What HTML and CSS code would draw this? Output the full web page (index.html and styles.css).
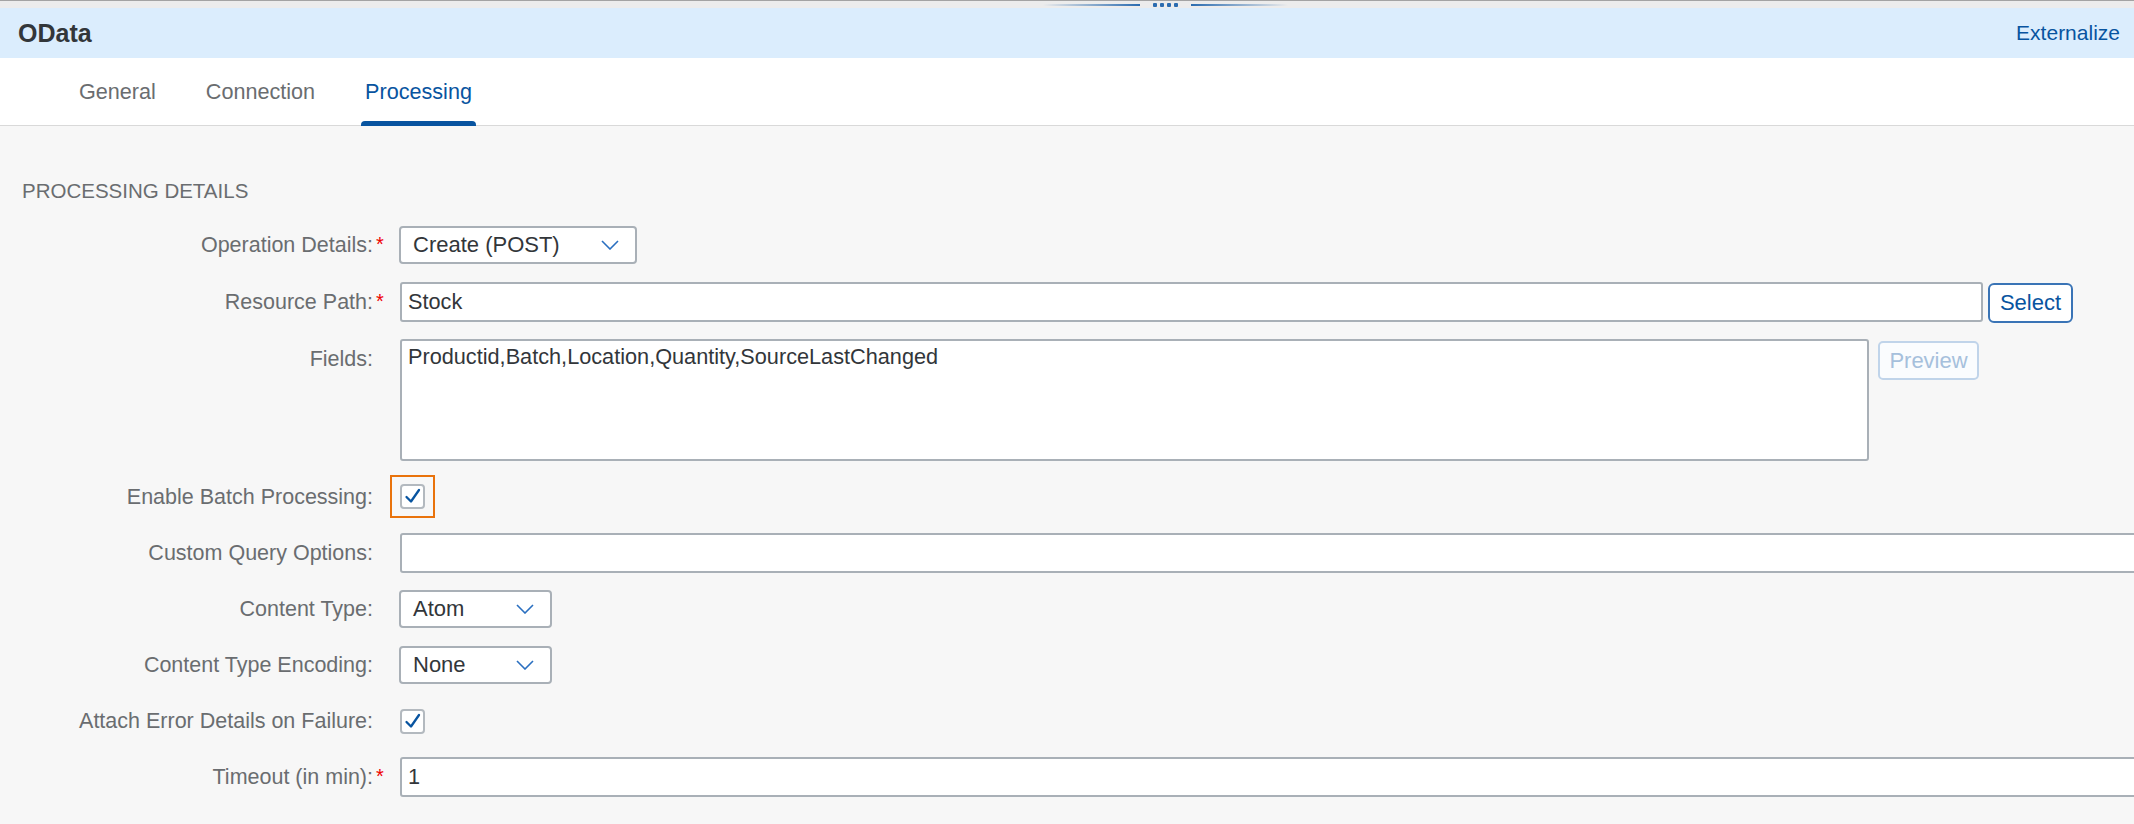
FILE: index.html
```html
<!DOCTYPE html>
<html lang="en">
<head>
<meta charset="utf-8">
<title>OData</title>
<link rel="stylesheet" href="styles.css">
</head>
<body>
<div class="topbar">
  <div class="handle">
    <span class="hline hline-left"></span>
    <span class="dots"><i></i><i></i><i></i><i></i></span>
    <span class="hline hline-right"></span>
  </div>
</div>
<header class="header">
  <h1 class="title">OData</h1>
  <a class="externalize">Externalize</a>
</header>
<nav class="tabs">
  <div class="tab">General</div>
  <div class="tab">Connection</div>
  <div class="tab active">Processing</div>
</nav>
<main class="content">
  <h2 class="section-title">PROCESSING DETAILS</h2>
  <div class="form">
    <div class="row">
      <label class="label required">Operation Details:</label>
      <div class="select select-op"><span>Create (POST)</span><svg class="chev" width="18" height="10" viewBox="0 0 18 10"><polyline points="1,1 9,9 17,1" fill="none" stroke="#2a6fc0" stroke-width="1.6"/></svg></div>
    </div>
    <div class="row">
      <label class="label required">Resource Path:</label>
      <div class="input input-resource">Stock</div>
      <button class="btn btn-select">Select</button>
    </div>
    <div class="row row-top">
      <label class="label">Fields:</label>
      <div class="textarea">Productid,Batch,Location,Quantity,SourceLastChanged</div>
      <button class="btn btn-preview">Preview</button>
    </div>
    <div class="row row-focus">
      <label class="label">Enable Batch Processing:</label>
      <div class="focus-ring">
        <div class="checkbox"><svg width="21" height="21" viewBox="0 0 21 21"><path d="M4.5 11 L9 15.5 L17 4" fill="none" stroke="#0854a0" stroke-width="2.3" stroke-linecap="round" stroke-linejoin="round"/></svg></div>
      </div>
    </div>
    <div class="row">
      <label class="label">Custom Query Options:</label>
      <div class="input input-wide"></div>
    </div>
    <div class="row">
      <label class="label">Content Type:</label>
      <div class="select select-small"><span>Atom</span><svg class="chev" width="18" height="10" viewBox="0 0 18 10"><polyline points="1,1 9,9 17,1" fill="none" stroke="#2a6fc0" stroke-width="1.6"/></svg></div>
    </div>
    <div class="row">
      <label class="label">Content Type Encoding:</label>
      <div class="select select-small"><span>None</span><svg class="chev" width="18" height="10" viewBox="0 0 18 10"><polyline points="1,1 9,9 17,1" fill="none" stroke="#2a6fc0" stroke-width="1.6"/></svg></div>
    </div>
    <div class="row">
      <label class="label">Attach Error Details on Failure:</label>
      <div class="checkbox"><svg width="21" height="21" viewBox="0 0 21 21"><path d="M4.5 11 L9 15.5 L17 4" fill="none" stroke="#0854a0" stroke-width="2.3" stroke-linecap="round" stroke-linejoin="round"/></svg></div>
    </div>
    <div class="row">
      <label class="label required">Timeout (in min):</label>
      <div class="input input-wide">1</div>
    </div>
  </div>
</main>
</body>
</html>
```
FILE: styles.css
```css
html, body {
  margin: 0;
  padding: 0;
}
body {
  width: 2134px;
  height: 824px;
  overflow: hidden;
  background: #f7f7f7;
  font-family: "Liberation Sans", Arial, sans-serif;
  color: #32363a;
}

/* top resize bar */
.topbar {
  height: 7px;
  background: #ececec;
  border-top: 1px solid #a3a3a3;
  display: flex;
  justify-content: center;
  align-items: center;
  padding-left: 196px;
}
.handle {
  display: flex;
  align-items: center;
  gap: 13px;
}
.hline {
  display: block;
  width: 97px;
  height: 2px;
}
.hline-left {
  background: linear-gradient(to right, rgba(43,108,176,0), #2b6cb0);
}
.hline-right {
  background: linear-gradient(to right, #2b6cb0, rgba(43,108,176,0));
}
.dots {
  display: flex;
  gap: 3px;
}
.dots i {
  display: block;
  width: 4px;
  height: 4px;
  background: #2b6cb0;
  border-radius: 1px;
}

/* header */
.header {
  height: 50px;
  background: #dbedfd;
  display: flex;
  align-items: center;
  justify-content: space-between;
  padding: 0 14px 0 18px;
}
.title {
  margin: 0;
  font-size: 25px;
  font-weight: 700;
  color: #32363a;
}
.externalize {
  font-size: 21px;
  color: #0854a0;
  cursor: pointer;
}

/* tabs */
.tabs {
  height: 67px;
  background: #fff;
  border-bottom: 1px solid #d9d9d9;
  display: flex;
  gap: 42px;
  padding-left: 75px;
}
.tab {
  position: relative;
  display: flex;
  align-items: center;
  padding: 0 4px;
  font-size: 21.6px;
  color: #6a6d70;
}
.tab.active {
  color: #0854a0;
}
.tab.active::after {
  content: "";
  position: absolute;
  left: 0;
  right: 0;
  bottom: -1px;
  height: 5px;
  background: #0854a0;
  border-radius: 4px 4px 0 0;
}

/* content */
.content {
  padding: 53px 0 0 22px;
}
.section-title {
  margin: 0 0 22px 0;
  font-size: 20.5px;
  line-height: 24px;
  font-weight: 400;
  color: #6a6d70;
}
.form {
  display: flex;
  flex-direction: column;
  gap: 16px;
  margin-left: -22px;
}
.row {
  display: flex;
  align-items: center;
  min-height: 40px;
}
.row-top {
  align-items: flex-start;
}
.row-focus {
  margin: -2px 0 -1px 0;
}
.label {
  position: relative;
  flex: none;
  width: 373px;
  margin-right: 27px;
  text-align: right;
  font-size: 21.5px;
  line-height: 40px;
  color: #6a6d70;
}
.label.required::after {
  content: "*";
  position: absolute;
  left: 100%;
  top: -1px;
  margin-left: 3px;
  color: #e00;
  font-size: 20px;
}

.input, .textarea {
  box-sizing: border-box;
  flex: none;
  background: #fff;
  border: 2px solid #a9b0b7;
  border-radius: 3px;
  padding: 0 6px;
  font-size: 21.7px;
  color: #32363a;
}
.input {
  height: 40px;
  display: flex;
  align-items: center;
}
.input-resource {
  width: 1583px;
}
.input-wide {
  width: 1800px;
}
.textarea {
  width: 1469px;
  height: 122px;
  padding-top: 3px;
  line-height: 26px;
}

.select {
  box-sizing: border-box;
  height: 38px;
  display: flex;
  align-items: center;
  justify-content: space-between;
  background: #fff;
  border: 2px solid #a9b0b7;
  border-radius: 4px;
  padding: 0 16px 0 12px;
  margin-left: -1px;
  font-size: 22px;
  color: #32363a;
}
.select-op {
  width: 238px;
}
.select-small {
  width: 153px;
}
.chev {
  flex: none;
}

.btn {
  box-sizing: border-box;
  flex: none;
  background: #fff;
  font-family: inherit;
  font-size: 22px;
  padding: 0;
}
.btn-select {
  width: 85px;
  height: 40px;
  margin-left: 5px;
  margin-top: 2px;
  border: 2px solid #3a74b6;
  border-radius: 6px;
  color: #0854a0;
}
.btn-preview {
  width: 101px;
  height: 39px;
  margin-left: 9px;
  margin-top: 2px;
  border: 2px solid #c0d4ea;
  border-radius: 5px;
  color: #a6c0dc;
  background: #fafcfe;
}

.focus-ring {
  border: 2px solid #e9730c;
  padding: 7px 8px;
  margin-left: -10px;
  display: flex;
}
.checkbox {
  box-sizing: border-box;
  width: 25px;
  height: 25px;
  border: 2px solid #b3b9bf;
  border-radius: 4px;
  background: #fff;
  display: flex;
  align-items: center;
  justify-content: center;
}
.checkbox svg {
  display: block;
}
```
